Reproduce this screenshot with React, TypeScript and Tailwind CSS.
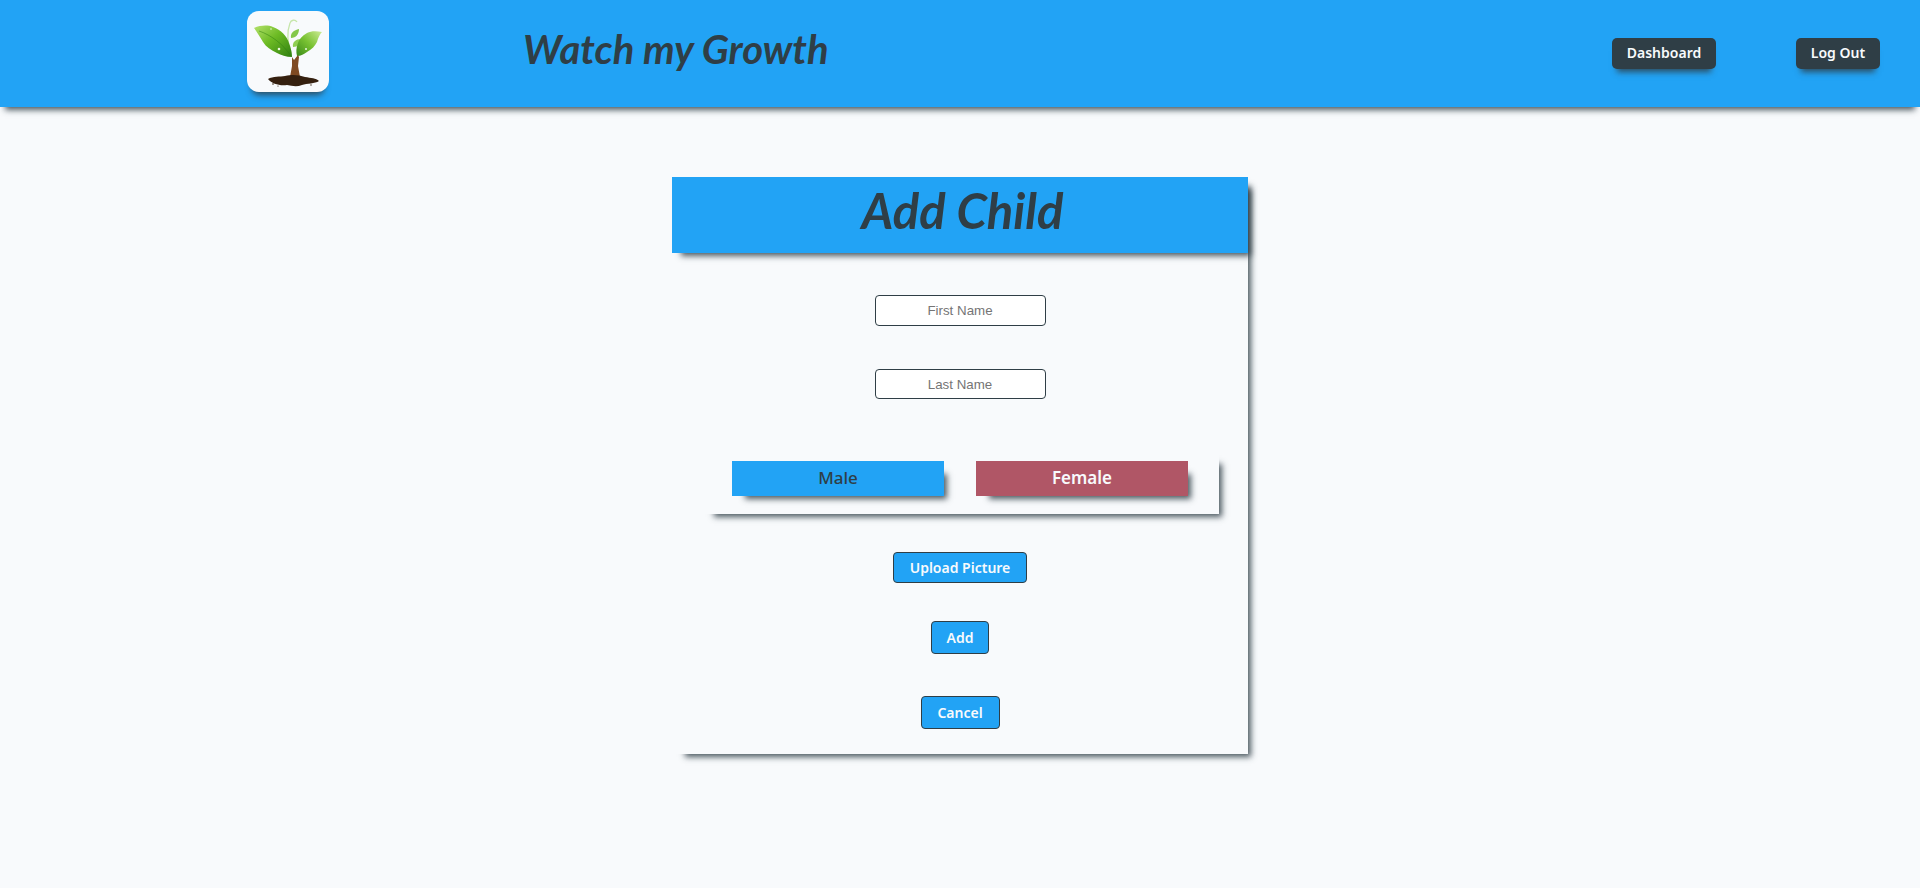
const scriptFont = "font-['Lato',sans-serif] italic font-bold";

const softShadow = "shadow-[8px_8px_6px_-5px_#2f3e46d9]";

const Logo = () => (
  <div className="h-[81px] w-[82px] shrink-0 overflow-hidden rounded-xl bg-[#f8fafc] shadow-[0_8px_6px_-5px_#2f3e46d9]">
    <svg viewBox="0 0 82 81" className="h-full w-full">
      <defs>
        <linearGradient id="leafA" x1="0" y1="0" x2="1" y2="1">
          <stop offset="0" stopColor="#b4e26c" />
          <stop offset="0.45" stopColor="#6dbb24" />
          <stop offset="1" stopColor="#2f7f10" />
        </linearGradient>
        <linearGradient id="leafB" x1="1" y1="0" x2="0" y2="1">
          <stop offset="0" stopColor="#cdeb95" />
          <stop offset="0.5" stopColor="#79c232" />
          <stop offset="1" stopColor="#3a8a1a" />
        </linearGradient>
      </defs>
      {/* tendril */}
      <path d="M44 42C40 32 40 20 43 12C44 9 48 8 50 11" fill="none" stroke="#c6e6aa" strokeWidth="1.3" />
      {/* sprout leaves */}
      <path d="M44 27C43 22 47 19 52 18C52 23 49 27 44 27Z" fill="#84c84a" />
      <path d="M46 36C45 31 49 28 54 28C53 33 51 36 46 36Z" fill="#8fcf52" />
      {/* main leaves */}
      <path d="M7 17C14 14 21 14 26 16C34 19 40 25 42 32C44 37 45 42 45 46C39 46 34 44 30 42C24 39 19 36 16 31C13 26 10 21 7 17Z" fill="url(#leafA)" />
      <path d="M75 21C69 20 64 20 60 22C55 25 52 28 51 32C49 37 49 41 50 45C54 45 57 43 60 41C65 38 68 35 70 31C71 27 73 23 75 21Z" fill="url(#leafB)" />
      <path d="M12 20C24 24 36 33 44 45" fill="none" stroke="#2f7f10" strokeWidth="0.5" />
      <circle cx="32" cy="38" r="1.3" fill="#eaf8dc" />
      <circle cx="59" cy="38" r="1" fill="#eaf8dc" />
      <circle cx="24" cy="18" r="0.8" fill="#eaf8dc" />
      {/* trunk */}
      <path d="M45 46L47 49L51 44L52 46L51 55L53 66H43L45 55Z" fill="#7f4a22" />
      {/* soil */}
      <path d="M21 68C26 65 33 66 38 65C46 63 52 64 58 66C64 67 69 67 72 70C68 73 60 72 55 74C50 76 45 75 40 74C33 75 25 73 21 68Z" fill="#35200f" />
      <circle cx="26" cy="73" r="0.8" fill="#35200f" />
      <circle cx="31" cy="75" r="0.6" fill="#35200f" />
      <circle cx="64" cy="74" r="0.7" fill="#35200f" />
    </svg>
  </div>
);

const PrimaryButton = ({ label, className }: { label: string; className: string }) => (
  <button className={`flex items-center justify-center rounded-[4px] border border-[#2f3e46] bg-[#22a3f5] pb-[1px] text-[14px] font-semibold text-[#f8fafc] ${className}`}>
    {label}
  </button>
);

const NameInput = ({ placeholder, className }: { placeholder: string; className: string }) => (
  <input
    placeholder={placeholder}
    className={`w-[171px] rounded-[4px] border border-[#2f3e46] bg-white text-center font-['Liberation_Sans',sans-serif] text-[13.33px] placeholder:text-[#757575] ${className}`}
  />
);

export default function App() {
  return (
    <div className="min-h-[888px] bg-[#f8fafc] font-['Noto_Sans',sans-serif]">
      {/* Header */}
      <header className="flex h-[107px] items-start bg-[#22a3f5] pl-[247px] pr-[40px] pt-[11px] shadow-[0_8px_6px_-5px_#2f3e46d9]">
        <Logo />
        <h1 className={`ml-[194px] mt-[13px] text-[40px] leading-[50px] text-[#2f3e46] ${scriptFont}`}>
          Watch my Growth
        </h1>
        <nav className="ml-auto mt-[27px] flex gap-[80px]">
          <button className="h-[31px] w-[104px] rounded-[5px] bg-[#2f3e46] pb-[2px] text-[14px] font-semibold text-[#f8fafc] shadow-[0_8px_6px_-5px_#2f3e46d9]">
            Dashboard
          </button>
          <button className="h-[31px] w-[84px] rounded-[5px] bg-[#2f3e46] pb-[2px] text-[14px] font-semibold text-[#f8fafc] shadow-[0_8px_6px_-5px_#2f3e46d9]">
            Log Out
          </button>
        </nav>
      </header>

      {/* Card */}
      <main className={`mx-auto mt-[70px] flex h-[577px] w-[576px] flex-col items-center ${softShadow}`}>
        <div className={`h-[76px] w-full bg-[#22a3f5] pl-[5px] text-center text-[49px] leading-[66px] text-[#2f3e46] shadow-[6px_6px_6px_-3px_#2f3e46d9] ${scriptFont}`}>
          Add Child
        </div>

        <NameInput placeholder="First Name" className="mt-[42px] h-[31px]" />
        <NameInput placeholder="Last Name" className="mt-[43px] h-[30px]" />

        {/* Gender */}
        <div className={`mr-[29px] mt-[52px] flex h-[63px] w-[518px] items-start justify-between self-end px-[31px] pt-[10px] ${softShadow}`}>
          <button className={`h-[35px] w-[212px] bg-[#22a3f5] pb-[2px] text-[17px] font-medium text-[#2f3e46] ${softShadow}`}>
            Male
          </button>
          <button className={`h-[35px] w-[212px] bg-[#b05666] pb-[2px] text-[17px] font-semibold text-[#f8fafc] ${softShadow}`}>
            Female
          </button>
        </div>

        <PrimaryButton label="Upload Picture" className="mt-[38px] h-[31px] w-[134px]" />
        <PrimaryButton label="Add" className="mt-[38px] h-[33px] w-[58px]" />
        <PrimaryButton label="Cancel" className="mt-[42px] h-[33px] w-[79px]" />
      </main>
    </div>
  );
}
